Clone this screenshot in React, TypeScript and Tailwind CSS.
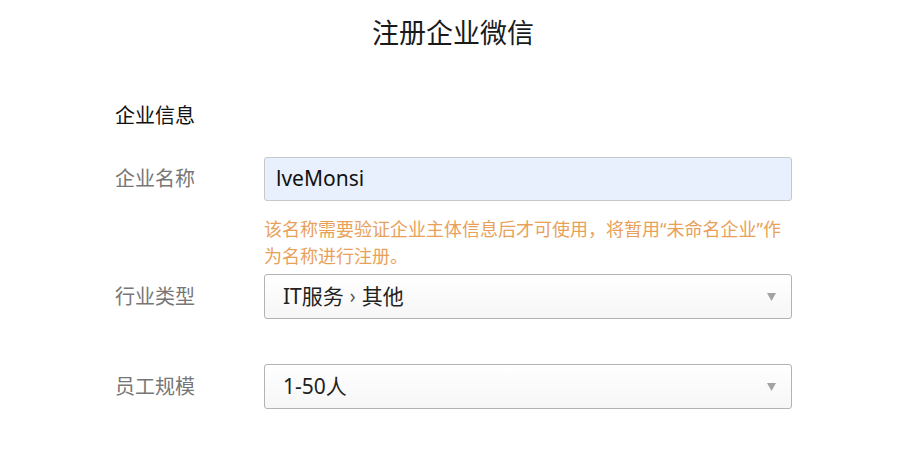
import React from 'react';

const font = { fontFamily: '"Noto Sans", "Noto Sans CJK SC", sans-serif' };

const Caret: React.FC = () => (
  <svg width="9" height="8" viewBox="0 0 9 8" className="shrink-0">
    <path d="M0 0 H9 L4.5 8 Z" fill="#a3a3a3" />
  </svg>
);

const Label: React.FC<{ text: string }> = ({ text }) => (
  <div className="w-[149px] shrink-0 text-[20px] text-[#777777]">{text}</div>
);

const SelectBox: React.FC<{ children: React.ReactNode }> = ({ children }) => (
  <div className="flex h-[45px] w-[528px] items-center justify-between rounded-[3px] border border-[#b3b3b3] bg-gradient-to-b from-white to-[#f6f6f6] pl-[18px] pr-[15px] text-[21px] text-[#222222]">
    <div className="flex items-center">{children}</div>
    <Caret />
  </div>
);

export default function App() {
  return (
    <div className="min-h-[451px] w-[916px] bg-white" style={font}>
      <h1 className="pr-[10px] pt-[13px] text-center text-[27px] leading-[40px] font-normal text-[#1a1a1a]">
        注册企业微信
      </h1>

      <div className="pl-[115px]">
        <h2 className="mt-[50px] text-[20px] leading-[26px] text-[#111111]">企业信息</h2>

        <div className="mt-[28px] flex items-center">
          <Label text="企业名称" />
          <div className="flex h-[44px] w-[528px] items-center rounded-[3px] border border-[#c8c8c8] bg-[#e8f0fe] pl-[11px] text-[21px] text-[#111111]">
            lveMonsi
          </div>
        </div>

        <div className="ml-[149px] mt-[15px] w-[528px] text-[18px] leading-[27px] text-[#e9a15a]">
          该名称需要验证企业主体信息后才可使用，将暂用“未命名企业”作为名称进行注册。
        </div>

        <div className="mt-[4px] flex items-center">
          <Label text="行业类型" />
          <SelectBox>
            <span>IT服务</span>
            <span className="mx-[6px] text-[19px] text-[#555555]">›</span>
            <span>其他</span>
          </SelectBox>
        </div>

        <div className="mt-[45px] flex items-center">
          <Label text="员工规模" />
          <SelectBox>
            <span>1-50人</span>
          </SelectBox>
        </div>
      </div>
    </div>
  );
}
